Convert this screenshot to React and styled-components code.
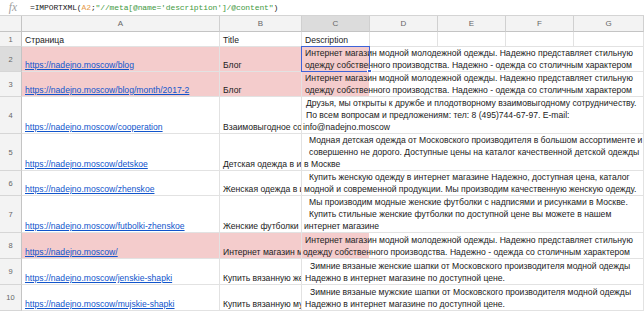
import React from 'react';
import styled, { createGlobalStyle } from 'styled-components';

const Global = createGlobalStyle`
  html, body { margin: 0; padding: 0; background: #fff; overflow: hidden; }
  body { font-family: "Liberation Sans", Arial, sans-serif; }
`;

const Page = styled.div`
  width: 644px;
  height: 312px;
  overflow: hidden;
  background: #fff;
  display: flex;
  flex-direction: column;
`;

const FormulaBar = styled.div`
  flex: none;
  height: 16px;
  box-sizing: border-box;
  border-bottom: 1px solid #d4d4d4;
  display: flex;
  align-items: center;
`;

const Fx = styled.div`
  width: 26px;
  text-align: center;
  font-family: "Liberation Serif", serif;
  font-style: italic;
  font-size: 11.5px;
  color: #a0a0a0;
  line-height: 15px;
`;

const Formula = styled.div`
  padding-left: 4px;
  font-family: "Liberation Mono", monospace;
  font-size: 8px;
  letter-spacing: -0.12px;
  color: #222;
  white-space: pre;
`;

const Ref = styled.span`
  color: #e69b4a;
`;

const Str = styled.span`
  color: #3f9a3f;
`;

const Grid = styled.div`
  display: grid;
  grid-template-columns: 22px 198px 82px 68px 68px 68px 68px 70px;
  grid-template-rows: ${(p) => p.$rows.map((r) => `${r}px`).join(' ')};
  font-family: "Liberation Sans", Arial, sans-serif;
  font-size: 8.6px;
  color: #222;
`;

const Corner = styled.div`
  background: #f3f3f3;
  border-right: 1px solid #c4c4c4;
  border-bottom: 1px solid #c4c4c4;
  box-sizing: border-box;
`;

const ColHead = styled.div`
  background: ${(p) => (p.$active ? '#dcdcdc' : '#f3f3f3')};
  border-right: 1px solid #d0d0d0;
  border-bottom: 1px solid #c4c4c4;
  box-sizing: border-box;
  display: flex;
  align-items: center;
  justify-content: center;
  font-size: 8px;
  color: #666;
`;

const RowHead = styled.div`
  background: ${(p) => (p.$active ? '#dcdcdc' : '#f3f3f3')};
  border-right: 1px solid #c4c4c4;
  border-bottom: 1px solid #d6d6d6;
  box-sizing: border-box;
  display: flex;
  align-items: center;
  justify-content: center;
  font-size: 7.5px;
  color: #666;
`;

const Cell = styled.div`
  background: ${(p) => (p.$pink ? '#f4cccc' : '#fff')};
  border-right: 1px solid #e2e2e2;
  border-bottom: 1px solid #e2e2e2;
  box-sizing: border-box;
  display: flex;
  flex-direction: column;
  justify-content: flex-end;
  padding: 0 0 0 3px;
  overflow: hidden;
  white-space: nowrap;
  line-height: 12px;
`;

const DescCell = styled.div`
  grid-column: span 5;
  position: relative;
  background: ${(p) =>
    p.$pink ? 'linear-gradient(90deg, #f4cccc 0 67px, #fff 67px)' : '#fff'};
  border-right: 1px solid #e2e2e2;
  border-bottom: 1px solid #e2e2e2;
  box-sizing: border-box;
  display: flex;
  flex-direction: column;
  justify-content: flex-end;
  white-space: nowrap;
  line-height: 12px;
`;

const Line = styled.div`
  padding-left: ${(p) => p.$indent}px;
`;

const Link = styled.a`
  color: #1155cc;
  text-decoration: underline;
`;

const Selection = styled.div`
  position: absolute;
  left: -1px;
  top: -1px;
  width: 69px;
  height: 26px;
  box-sizing: border-box;
  border: 1px solid #3d63d8;
  pointer-events: none;
`;

const Handle = styled.div`
  position: absolute;
  right: -3px;
  bottom: -3px;
  width: 5px;
  height: 5px;
  box-sizing: border-box;
  background: #3d63d8;
  border: 1px solid #fff;
`;

const INTERNET = [
  'Интернет магазин модной молодежной одежды. Надежно представляет стильную',
  'одежду собственного производства. Надежно - одежда со столичным характером',
];

const rows = [
  { n: 2, h: 25, pink: true, url: 'https://nadejno.moscow/blog', title: 'Блог', lines: INTERNET, ind: [3, 3] },
  { n: 3, h: 25, pink: true, url: 'https://nadejno.moscow/blog/month/2017-2', title: 'Блог', lines: INTERNET, ind: [3, 3] },
  {
    n: 4, h: 37, url: 'https://nadejno.moscow/cooperation', title: 'Взаимовыгодное сотрудничество',
    lines: [
      'Друзья, мы открыты к дружбе и плодотворному взаимовыгодному сотрудничеству.',
      'По всем вопросам и предложениям: тел: 8 (495)744-67-97. E-mail:',
      'info@nadejno.moscow',
    ],
    ind: [4, 4, 1],
  },
  {
    n: 5, h: 37, url: 'https://nadejno.moscow/detskoe', title: 'Детская одежда в интернет магазине',
    lines: [
      'Модная детская одежда от Московского производителя в большом ассортименте и',
      'совершенно не дорого. Доступные цены на каталог качественной детской одежды',
      'в Москве',
    ],
    ind: [7, 7, 2],
  },
  {
    n: 6, h: 25, url: 'https://nadejno.moscow/zhenskoe', title: 'Женская одежда в интернет магазине',
    lines: [
      'Купить женскую одежду в интернет магазине Надежно, доступная цена, каталог',
      'модной и современной продукции. Мы производим качественную женскую одежду.',
    ],
    ind: [7, 2],
  },
  {
    n: 7, h: 37, url: 'https://nadejno.moscow/futbolki-zhenskoe', title: 'Женские футболки в Москве',
    lines: [
      'Мы производим модные женские футболки с надписями и рисунками в Москве.',
      'Купить стильные женские футболки по доступной цене вы можете в нашем',
      'интернет магазине',
    ],
    ind: [7, 7, 2],
  },
  { n: 8, h: 26, pink: true, url: 'https://nadejno.moscow/', title: 'Интернет магазин модной одежды', lines: INTERNET, ind: [3, 1] },
  {
    n: 9, h: 26, url: 'https://nadejno.moscow/jenskie-shapki', title: 'Купить вязанную женскую шапку',
    lines: [
      'Зимние вязаные женские шапки от Московского производителя модной одежды',
      'Надежно в интернет магазине по доступной цене.',
    ],
    ind: [8, 3],
  },
  {
    n: 10, h: 26, url: 'https://nadejno.moscow/mujskie-shapki', title: 'Купить вязанную мужскую шапку',
    lines: [
      'Зимние вязаные мужские шапки от Московского производителя модной одежды',
      'Надежно в интернет магазине по доступной цене.',
    ],
    ind: [8, 3],
  },
];

const COLS = ['A', 'B', 'C', 'D', 'E', 'F', 'G'];

export default function App() {
  const heights = [16, 15, ...rows.map((r) => r.h)];
  return (
    <Page>
      <Global />
      <FormulaBar>
        <Fx>fx</Fx>
        <Formula>
          =IMPORTXML(<Ref>A2</Ref>;<Str>"//meta[@name='description']/@content"</Str>)
        </Formula>
      </FormulaBar>
      <Grid $rows={heights}>
        <Corner />
        {COLS.map((c) => (
          <ColHead key={c} $active={c === 'C'}>{c}</ColHead>
        ))}

        <RowHead>1</RowHead>
        <Cell>Страница</Cell>
        <Cell>Title</Cell>
        <Cell>Description</Cell>
        <Cell />
        <Cell />
        <Cell />
        <Cell />

        {rows.map((r) => (
          <React.Fragment key={r.n}>
            <RowHead $active={r.n === 2}>{r.n}</RowHead>
            <Cell $pink={r.pink}>
              <div>
                <Link href={r.url}>{r.url}</Link>
              </div>
            </Cell>
            <Cell $pink={r.pink}>{r.title}</Cell>
            <DescCell $pink={r.pink}>
              {r.lines.map((l, i) => (
                <Line key={i} $indent={r.ind[i]}>{l}</Line>
              ))}
              {r.n === 2 && (
                <Selection>
                  <Handle />
                </Selection>
              )}
            </DescCell>
          </React.Fragment>
        ))}
      </Grid>
    </Page>
  );
}
